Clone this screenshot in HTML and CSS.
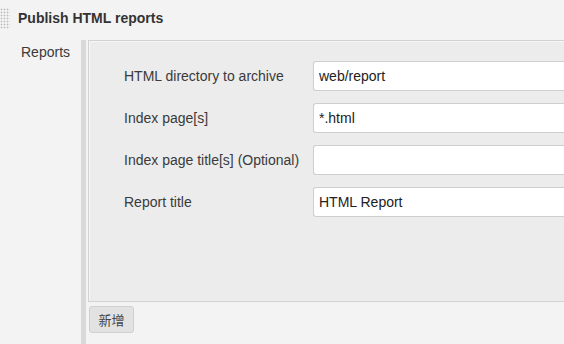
FILE: index.html
```html
<!DOCTYPE html>
<html lang="en">
<head>
  <meta charset="UTF-8" />
  <title>Publish HTML reports</title>
  <link rel="stylesheet" href="styles.css">
</head>
<body>
  <div class="section-head">
    <div class="grip"></div>
    <div class="section-title">Publish HTML reports</div>
  </div>

  <div class="setting">
    <div class="setting-name">Reports</div>
    <div class="setting-main">
      <div class="repeated-chunk">
        <div class="field">
          <label>HTML directory to archive</label>
          <input type="text" value="web/report">
        </div>
        <div class="field">
          <label>Index page[s]</label>
          <input type="text" value="*.html">
        </div>
        <div class="field">
          <label>Index page title[s] (Optional)</label>
          <input type="text" value="">
        </div>
        <div class="field">
          <label>Report title</label>
          <input type="text" value="HTML Report">
        </div>
      </div>
      <button class="add-btn">新增</button>
    </div>
  </div>
</body>
</html>
```

FILE: styles.css
```css
body {
  margin: 0;
  font-family: "Liberation Sans", Arial, "Noto Sans CJK SC", sans-serif;
  background-color: #f3f3f3;
  color: #333;
  height: 344px;
  overflow: hidden;
}
.section-head {
  display: flex;
  align-items: center;
  height: 36px;
}
.grip {
  width: 10px;
  height: 21px;
  margin-top: 1px;
  background-image: radial-gradient(circle, #bdbdbd 0.8px, transparent 1.1px);
  background-size: 3px 3px;
  background-position: 0 0;
}
.section-title {
  margin-left: 8px;
  font-weight: bold;
  font-size: 14px;
  color: #333;
}
.setting {
  display: flex;
  margin-top: 4px;
}
.setting-name {
  width: 60px;
  padding-left: 21px;
  padding-top: 4px;
  font-size: 14px;
  color: #3a3a3a;
}
.setting-main {
  flex: 1;
  border-left: 5px solid #d9d9d9;
  padding-left: 2px;
  min-height: 304px;
}
.repeated-chunk {
  background: #ececec;
  border: 1px solid #d2d2d2;
  border-right: none;
  box-shadow: inset 1px 1px 0 #f6f6f6;
  padding: 20px 0 84px 35px;
  display: flex;
  flex-direction: column;
  gap: 12px;
}
.field {
  display: flex;
  align-items: center;
}
.field label {
  width: 189px;
  font-size: 14px;
  color: #3a3a3a;
}
.field input {
  flex: 1;
  height: 30px;
  box-sizing: border-box;
  border: 1px solid #cfcfcf;
  border-right: none;
  border-radius: 3px 0 0 3px;
  background: #fff;
  padding: 0 5px;
  font-family: "Liberation Sans", Arial, sans-serif;
  font-size: 14px;
  color: #222;
}
.add-btn {
  margin-top: 4px;
  margin-left: 1px;
  width: 45px;
  height: 27px;
  border: 1px solid #d0d0d0;
  border-radius: 3px;
  background: #e2e2e2;
  font-family: "Noto Sans CJK SC", sans-serif;
  font-size: 13px;
  color: #444;
  padding: 0;
}
```
